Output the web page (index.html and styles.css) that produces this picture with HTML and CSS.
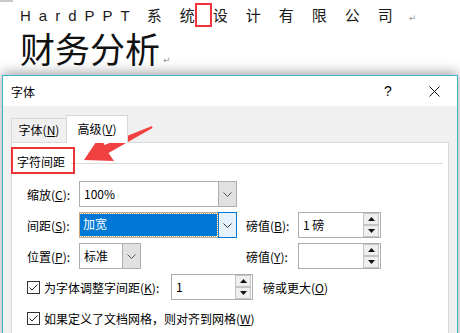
FILE: index.html
```html
<!DOCTYPE html>
<html lang="zh-CN">

<head>
    <meta charset="UTF-8">
    <meta name="viewport" content="width=device-width, initial-scale=1.0">
    <title>字体 - 高级</title>
    <link rel="stylesheet" href="styles.css">
</head>

<body>

    <div class="ruler"></div>

    <div class="doc">
        <p class="doc-line"><span class="latin">HardPPT</span><span class="cjk">系统<span class="mark"></span>设计有限公</span><span class="cjk-last">司</span><span class="ret">↵</span></p>
        <p class="doc-title">财务分析<span class="ret">↵</span></p>
    </div>

    <div class="dialog">
        <div class="title-bar">
            <span class="title">字体</span>
            <span class="title-btn">?</span>
            <span class="title-btn">
                <svg width="11" height="11" viewBox="0 0 11 11"><path d="M0.5 0.5 L10.5 10.5 M10.5 0.5 L0.5 10.5" stroke="#111" stroke-width="1" fill="none"/></svg>
            </span>
        </div>

        <div class="dialog-body">
            <div class="tabs">
                <div class="tab">字体(<u>N</u>)</div>
                <div class="tab active">高级(<u>V</u>)</div>
            </div>

            <div class="panel">
                <div class="group-head">
                    <span>字符间距</span>
                    <div class="group-line"></div>
                </div>

                <div class="row">
                    <span class="lbl">缩放(<u>C</u>):</span>
                    <div class="combo wide">
                        <span class="combo-text">100%</span>
                        <span class="combo-btn"><svg width="9" height="5" viewBox="0 0 9 5"><path d="M0.5 0.5 L4.5 4.5 L8.5 0.5" stroke="#555" fill="none"/></svg></span>
                    </div>
                </div>

                <div class="row">
                    <span class="lbl">间距(<u>S</u>):</span>
                    <div class="combo wide focus">
                        <span class="combo-text selected">加宽</span>
                        <span class="combo-btn"><svg width="9" height="5" viewBox="0 0 9 5"><path d="M0.5 0.5 L4.5 4.5 L8.5 0.5" stroke="#333" fill="none"/></svg></span>
                    </div>
                    <span class="lbl right-lbl">磅值(<u>B</u>):</span>
                    <div class="spin">
                        <span class="spin-text">1 磅</span>
                        <div class="spin-btns">
                            <span class="spin-btn"><svg width="7" height="4" viewBox="0 0 7 4"><path d="M0 4 L3.5 0 L7 4 Z" fill="#111"/></svg></span>
                            <span class="spin-btn"><svg width="7" height="4" viewBox="0 0 7 4"><path d="M0 0 L3.5 4 L7 0 Z" fill="#111"/></svg></span>
                        </div>
                    </div>
                </div>

                <div class="row">
                    <span class="lbl">位置(<u>P</u>):</span>
                    <div class="combo narrow">
                        <span class="combo-text">标准</span>
                        <span class="combo-btn"><svg width="9" height="5" viewBox="0 0 9 5"><path d="M0.5 0.5 L4.5 4.5 L8.5 0.5" stroke="#555" fill="none"/></svg></span>
                    </div>
                    <span class="lbl far-lbl">磅值(<u>Y</u>):</span>
                    <div class="spin">
                        <span class="spin-text"></span>
                        <div class="spin-btns">
                            <span class="spin-btn"><svg width="7" height="4" viewBox="0 0 7 4"><path d="M0 4 L3.5 0 L7 4 Z" fill="#111"/></svg></span>
                            <span class="spin-btn"><svg width="7" height="4" viewBox="0 0 7 4"><path d="M0 0 L3.5 4 L7 0 Z" fill="#111"/></svg></span>
                        </div>
                    </div>
                </div>

                <div class="row">
                    <span class="check"><svg width="13" height="13" viewBox="0 0 13 13"><rect x="0.5" y="0.5" width="12" height="12" fill="#fff" stroke="#333"/><path d="M2.5 6.5 L5 9 L10.5 3.5" stroke="#222" fill="none"/></svg></span>
                    <span class="check-lbl kern-lbl">为字体调整字间距(<u>K</u>):</span>
                    <div class="spin small">
                        <span class="spin-text">1</span>
                        <div class="spin-btns">
                            <span class="spin-btn"><svg width="7" height="4" viewBox="0 0 7 4"><path d="M0 4 L3.5 0 L7 4 Z" fill="#111"/></svg></span>
                            <span class="spin-btn"><svg width="7" height="4" viewBox="0 0 7 4"><path d="M0 0 L3.5 4 L7 0 Z" fill="#111"/></svg></span>
                        </div>
                    </div>
                    <span class="after-lbl">磅或更大(<u>O</u>)</span>
                </div>

                <div class="row">
                    <span class="check"><svg width="13" height="13" viewBox="0 0 13 13"><rect x="0.5" y="0.5" width="12" height="12" fill="#fff" stroke="#333"/><path d="M2.5 6.5 L5 9 L10.5 3.5" stroke="#222" fill="none"/></svg></span>
                    <span class="check-lbl">如果定义了文档网格，则对齐到网格(<u>W</u>)</span>
                </div>
            </div>
        </div>
    </div>

    <!-- annotations drawn over the dialog -->
    <div class="hl-box"></div>
    <svg class="arrow" width="460" height="333" viewBox="0 0 460 333">
        <polygon points="84,160 100,136 104.5,145 152,126 152.5,128 108.5,153 114,161" fill="#f04040"/>
    </svg>

</body>

</html>
```

FILE: styles.css
```css
body {
    margin: 0;
    padding: 0;
    width: 460px;
    height: 333px;
    overflow: hidden;
    background: #ffffff;
    font-family: "Noto Sans CJK SC", sans-serif;
    color: #000;
}

.ruler {
    width: 13px;
    height: 2px;
    background: #c8c8c8;
}

.doc {
    padding-left: 20px;
    height: 73px;
}

.doc-line {
    margin: 0;
    height: 26px;
    line-height: 26px;
    font-size: 15px;
    color: #1a1a1a;
    white-space: nowrap;
}

.latin {
    font-family: "Liberation Sans", sans-serif;
    letter-spacing: 8px;
    margin-right: 9px;
}

.cjk {
    font-family: "Noto Sans CJK SC", sans-serif;
    letter-spacing: 18px;
}

.cjk-last {
    margin-right: 16px;
}

.mark {
    display: inline-block;
    box-sizing: border-box;
    width: 17px;
    height: 24px;
    margin-left: -18px;
    margin-right: 1px;
    border: 2px solid #f0333a;
    vertical-align: -6px;
}

.ret {
    font-family: "DejaVu Sans", sans-serif;
    font-size: 9px;
    color: #999;
}

.doc-title {
    margin: 0;
    height: 40px;
    line-height: 40px;
    font-size: 35px;
    color: #111;
    white-space: nowrap;
}

.doc-title .ret {
    margin-left: 3px;
}

.dialog {
    margin-left: 2px;
    width: 456px;
    height: 270px;
    box-sizing: border-box;
    border: 1px solid #3ab5c8;
    border-bottom: none;
    background: #f0f0f0;
    box-shadow: 0 -2px 12px rgba(0, 0, 0, 0.38);
    font-size: 12px;
}

.title-bar {
    display: flex;
    align-items: center;
    height: 30px;
    background: #ffffff;
    padding-left: 8px;
}

.title {
    flex: 1;
}

.title-btn {
    width: 46px;
    height: 30px;
    display: flex;
    justify-content: center;
    align-items: center;
    font-family: "Liberation Sans", sans-serif;
    font-size: 14px;
}

.dialog-body {
    padding: 9px 8px 0 8px;
}

.tabs {
    display: flex;
    align-items: flex-end;
    height: 27px;
}

.tab {
    box-sizing: border-box;
    width: 56px;
    height: 24px;
    line-height: 22px;
    text-align: center;
    border: 1px solid #d9d9d9;
    border-bottom: none;
    background: #f0f0f0;
}

.tab.active {
    width: 62px;
    height: 28px;
    line-height: 26px;
    margin-left: -1px;
    margin-bottom: -1px;
    background: #ffffff;
    position: relative;
    z-index: 1;
}

.panel {
    box-sizing: border-box;
    height: 200px;
    background: #ffffff;
    border: 1px solid #d9d9d9;
    padding: 0 0 0 15px;
}

.group-head {
    display: flex;
    align-items: center;
    height: 18px;
    padding-top: 9px;
    margin-left: -10px;
    margin-right: 5px;
}

.group-line {
    flex: 1;
    height: 1px;
    background: #dcdcdc;
    margin-left: 6px;
    margin-top: 4px;
}

.row {
    display: flex;
    align-items: center;
    height: 26px;
    margin-top: 5px;
}

.group-head + .row {
    margin-top: 11px;
}

.lbl {
    width: 52px;
    white-space: nowrap;
}

.right-lbl {
    margin-left: 9px;
}

.far-lbl {
    margin-left: 105px;
}

.combo {
    box-sizing: border-box;
    height: 26px;
    border: 1px solid #adadad;
    display: flex;
    background: #ffffff;
}

.combo.wide {
    width: 158px;
}

.combo.narrow {
    width: 62px;
}

.combo-text {
    flex: 1;
    padding-left: 4px;
    line-height: 24px;
}

.combo-text.selected {
    margin: 1px 1px 1px 0;
    padding-left: 3px;
    line-height: 20px;
    background: #0078d7;
    color: #ffffff;
    outline: 1px dotted #f0a040;
}

.combo-btn {
    width: 17px;
    display: flex;
    justify-content: center;
    align-items: center;
    background: #e1e1e1;
    border-left: 1px solid #adadad;
}

.combo.focus .combo-btn {
    background: #e5f1fb;
    border: 1px solid #0078d7;
    margin: -1px -1px -1px 0;
    width: 17px;
}

.spin {
    box-sizing: border-box;
    width: 83px;
    height: 26px;
    border: 1px solid #adadad;
    display: flex;
    background: #ffffff;
}

.spin.small {
    width: 82px;
}

.spin-text {
    flex: 1;
    padding-left: 4px;
    line-height: 24px;
}

.spin-btns {
    display: flex;
    flex-direction: column;
    width: 16px;
    margin: 0 1px 0 0;
}

.spin-btn {
    box-sizing: border-box;
    height: 12px;
    display: flex;
    justify-content: center;
    align-items: center;
    border: 1px solid #c4c4c4;
    background: #efefef;
}

.check {
    width: 13px;
    height: 13px;
    display: flex;
}

.check-lbl {
    margin-left: 4px;
    white-space: nowrap;
}

.kern-lbl {
    width: 127px;
}

.after-lbl {
    margin-left: 10px;
}

.hl-box {
    position: absolute;
    left: 11px;
    top: 147px;
    width: 64px;
    height: 27px;
    box-sizing: border-box;
    border: 2px solid #ee3338;
}

.arrow {
    position: absolute;
    left: 0;
    top: 0;
    pointer-events: none;
}
```
